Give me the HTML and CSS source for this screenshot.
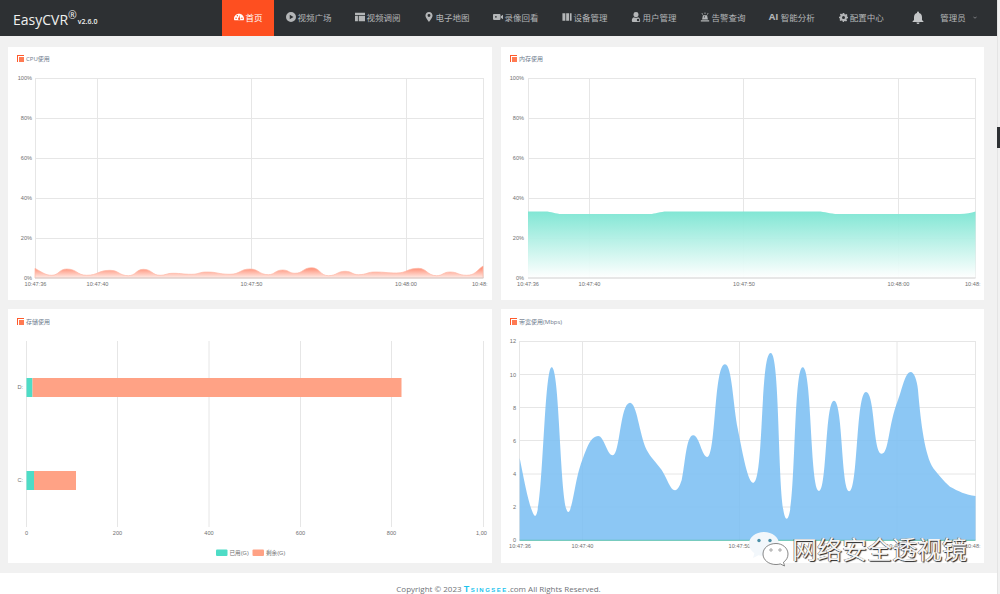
FILE: index.html
```html
<!DOCTYPE html>
<html lang="zh">
<head>
<meta charset="utf-8">
<title>EasyCVR</title>
<link rel="stylesheet" href="styles.css">
</head>
<body>
<div class="page">
  <header class="topbar">
    <div class="logo"><span class="logo-name">EasyCVR</span><span class="logo-reg">®</span><span class="logo-ver">v2.6.0</span></div>
    <nav class="nav">
      <a class="nav-item active"><svg class="ico" viewBox="0 0 24 24"><path fill-rule="evenodd" d="M12 4C5.400 4 0 9.400 0 16c0 1.600.4 3 1 4h22c.6-1 1-2.400 1-4 0-6.600-5.400-12-12-12zM5 16.500a1.800 1.800 0 1 1 0-3.600 1.800 1.800 0 0 1 0 3.600zM8 10.500a1.800 1.800 0 1 1 0-3.600 1.800 1.800 0 0 1 0 3.600zM19 16.500a1.800 1.800 0 1 1 0-3.600 1.800 1.800 0 0 1 0 3.600zM12 19a2.500 2.500 0 0 1-1-4.800L13 7l1 7.500A2.500 2.500 0 0 1 12 19z"/></svg>首页</a>
      <a class="nav-item"><svg class="ico" viewBox="0 0 24 24"><path fill-rule="evenodd" d="M12 0a12 12 0 1 0 0 24 12 12 0 0 0 0-24zM9 6.500l9 5.500-9 5.500z"/></svg>视频广场</a>
      <a class="nav-item"><svg class="ico" viewBox="0 0 24 24"><path d="M0 2h24v5H0zM0 9h7v13H0zM9 9h15v13H9z"/></svg>视频调阅</a>
      <a class="nav-item"><svg class="ico" viewBox="0 0 24 24"><path fill-rule="evenodd" d="M12 0C7 0 3.500 3.800 3.500 8.500 3.500 14 12 24 12 24s8.500-10 8.500-15.500C20.500 3.800 17 0 12 0zm0 12a3.500 3.500 0 1 1 0-7 3.500 3.500 0 0 1 0 7z"/></svg>电子地图</a>
      <a class="nav-item"><svg class="ico" viewBox="0 0 24 24"><path fill-rule="evenodd" d="M2 5h14a2 2 0 0 1 2 2v10a2 2 0 0 1-2 2H2a2 2 0 0 1-2-2V7a2 2 0 0 1 2-2zm5 4.500a2 2 0 1 0 0 4 2 2 0 0 0 0-4zM19 10l5-3.500v11L19 14z"/></svg>录像回看</a>
      <a class="nav-item"><svg class="ico" viewBox="0 0 24 24"><path d="M1 3h7v18H1zM10 3h7v18h-7zM19 3h4v18h-4z"/></svg>设备管理</a>
      <a class="nav-item"><svg class="ico" viewBox="0 0 24 24"><path fill-rule="evenodd" d="M12 0a6 6 0 0 1 6 6.500c0 3-2 6-6 6s-6-3-6-6A6 6 0 0 1 12 0zM7 12.500c1.500 1.300 3 2 5 2 2 0 3.500-.7 5-2 3.500 1 5 4.500 5 8.500 0 2-1.300 3-3 3H5c-1.700 0-3-1-3-3 0-4 1.500-7.500 5-8.500zM17 16a3 3 0 1 0 0 6 3 3 0 0 0 0-6z"/></svg>用户管理</a>
      <a class="nav-item"><svg class="ico" viewBox="0 0 24 24"><path fill-rule="evenodd" d="M7 8h10l2 10H5zM12 10a3 3 0 0 0-3 3h2a1 1 0 0 1 1-1zM2 20h20v3H2zM11 1h2v4h-2zM3.500 3.500l1.500-1.400 2.500 3-1.400 1.300zM20.500 3.500L19 2.100l-2.500 3 1.400 1.300z"/></svg>告警查询</a>
      <a class="nav-item"><span class="ai">AI</span>智能分析</a>
      <a class="nav-item"><svg class="ico ico-gear" viewBox="0 0 24 24"><path fill-rule="evenodd" d="M10 0h4l.7 3.200 2.300 1 2.800-1.800 2.800 2.800L21 8l1 2.300L24 10v4l-3.200.7-1 2.300 1.800 2.800-2.800 2.800L16 21l-2.300 1-.7 2h-3l-.7-3.200-2.300-1-2.800 1.800-2.800-2.800L3 16l-1-2.300L0 14v-4l3.200-.7 1-2.300L2.400 4.200l2.800-2.800L8 3.200l1.400-.6zM12 8a4 4 0 1 0 0 8 4 4 0 0 0 0-8z"/></svg>配置中心</a>
    </nav>
    <div class="user">
      <svg class="bell" viewBox="0 0 24 24"><path d="M12 0a2 2 0 0 1 2 2v1c4 1 6 4.500 6 8.500V17l3 3v1H1v-1l3-3v-5.500C4 7.500 6 4 10 3V2a2 2 0 0 1 2-2zM9 22h6a3 3 0 0 1-6 0z"/></svg>
      <span class="user-name">管理员</span>
      <svg class="chev" viewBox="0 0 10 6"><path d="M1 1l4 4 4-4" fill="none" stroke="currentColor" stroke-width="1.500"/></svg>
    </div>
  </header>

  <main class="board">
    <section class="card">
      <h2 class="card-title"><svg class="title-ico" viewBox="0 0 7 7"><path class="ti-a" d="M0 0h7v1H1v6H0z"/><path class="ti-b" d="M2 2h5v5H2z"/></svg>CPU使用</h2>
      <svg class="chart" viewBox="8 71 484 229" width="484" height="229">
        <defs>
          <linearGradient id="gCpu" x1="0" y1="0" x2="0" y2="1"><stop offset="0" stop-color="#ff7d60"/><stop offset="1" stop-color="#ffece7"/></linearGradient>
        </defs>
        <path class="grid" d="M35.500 78.500H483.500M35.500 118.500H483.500M35.500 158.500H483.500M35.500 198.500H483.500M35.500 238.500H483.500M35.500 78V278M97.500 78V278M251.500 78V278M406.500 78V278M483.500 78V278"/>
        <path fill="url(#gCpu)" stroke="#ffb9a8" stroke-width=".7" d="M35,268.300C43,273 46,275.300 51.700,275.300C59,275.300 59,269 66.700,269C77,269 77,275.300 86.700,275.300C98,275.300 98,270.300 110,270.300C119,270.300 119,275.700 128.300,275.700C136,275.700 136,269.300 143.300,269.300C152,269.300 152,275.300 160,275.300C166,275.300 166,273.300 173,273.300C182,273.300 182,274.300 191.700,274.300C199,274.300 199,272 206.700,272C218,272 218,274.300 230,274.300C240,274.300 240,269 250,269C259,269 259,274.700 268.300,274.700C275,274.700 275,270 282.700,270C289,270 289,273.300 295,273.300C303,273.300 303,267.700 311.700,267.700C320,267.700 320,275.700 328.300,275.700C337,275.700 337,271.300 345,271.300C352,271.300 352,274.700 358.300,274.700C367,274.700 367,272 375,272C386,272 386,273 396.700,273C407,273 407,268.300 418.300,268.300C427,268.300 427,275.700 436.700,275.700C443,275.700 443,272 450,272C458,272 458,275.300 466.700,275.300C475,275.300 476,271 483,266L483,278L35,278Z"/>
        <path class="axis" d="M35 278H483.500"/>
        <g class="tick end"><text x="32" y="80">100%</text><text x="32" y="120">80%</text><text x="32" y="160">60%</text><text x="32" y="200">40%</text><text x="32" y="240">20%</text><text x="32" y="280">0%</text></g>
        <g class="tick mid"><text x="35.500" y="286">10:47:36</text><text x="97.500" y="286">10:47:40</text><text x="251.500" y="286">10:47:50</text><text x="406" y="286">10:48:00</text></g>
        <text class="tick" x="472" y="286">10:48:</text>
      </svg>
    </section>

    <section class="card">
      <h2 class="card-title"><svg class="title-ico" viewBox="0 0 7 7"><path class="ti-a" d="M0 0h7v1H1v6H0z"/><path class="ti-b" d="M2 2h5v5H2z"/></svg>内存使用</h2>
      <svg class="chart" viewBox="501 71 483 229" width="483" height="229">
        <defs>
          <linearGradient id="gMem" x1="0" y1="0" x2="0" y2="1"><stop offset="0" stop-color="#7be5d2"/><stop offset="1" stop-color="#ffffff"/></linearGradient>
        </defs>
        <path class="grid" d="M528 78.500H975.500M528 118.500H975.500M528 158.500H975.500M528 198.500H975.500M528 238.500H975.500M528.500 78V278M589.500 78V278M743.500 78V278M898.500 78V278M975.500 78V278"/>
        <path fill="url(#gMem)" fill-opacity=".95" d="M528,211.500L545,211.500C552,211.500 555,214 562,214L650,214C655,214 660,211.500 667,211.500L818,211.500C825,211.500 830,214 838,214L960,214C966,214 971,213 975.500,211.500L975.500,278L528,278Z"/>
        <path class="axis" d="M528 278H975.500"/>
        <g class="tick end"><text x="524" y="80">100%</text><text x="524" y="120">80%</text><text x="524" y="160">60%</text><text x="524" y="200">40%</text><text x="524" y="240">20%</text><text x="524" y="280">0%</text></g>
        <g class="tick mid"><text x="528" y="286">10:47:36</text><text x="589.500" y="286">10:47:40</text><text x="744" y="286">10:47:50</text><text x="898.500" y="286">10:48:00</text></g>
        <text class="tick" x="965" y="286">10:48:</text>
      </svg>
    </section>

    <section class="card">
      <h2 class="card-title low"><svg class="title-ico" viewBox="0 0 7 7"><path class="ti-a" d="M0 0h7v1H1v6H0z"/><path class="ti-b" d="M2 2h5v5H2z"/></svg>存储使用</h2>
      <svg class="chart" viewBox="8 333 484 230" width="484" height="230">
        <path class="grid" d="M26.500 341V527M117.500 341V527M209 341V527M300.500 341V527M391.500 341V527M483.500 341V527"/>
        <rect class="teal" x="26.500" y="378" width="6" height="19"/>
        <rect class="salmon" x="32.500" y="378" width="369" height="19"/>
        <rect class="teal" x="26.500" y="471" width="7.500" height="19"/>
        <rect class="salmon" x="34" y="471" width="42" height="19"/>
        <g class="tick end"><text x="23" y="389">D:</text><text x="23" y="482">C:</text></g>
        <g class="tick mid"><text x="26.500" y="534.500">0</text><text x="117.500" y="534.500">200</text><text x="209" y="534.500">400</text><text x="300.500" y="534.500">600</text><text x="391.500" y="534.500">800</text></g>
        <text class="tick" x="476" y="534.500">1,00</text>
        <rect class="teal" x="216" y="549.500" width="11.500" height="6.500" rx="1"/>
        <text class="tick" x="229.500" y="555">已用(G)</text>
        <rect class="salmon" x="252.500" y="549.500" width="11.500" height="6.500" rx="1"/>
        <text class="tick" x="266" y="555">剩余(G)</text>
      </svg>
    </section>

    <section class="card">
      <h2 class="card-title low"><svg class="title-ico" viewBox="0 0 7 7"><path class="ti-a" d="M0 0h7v1H1v6H0z"/><path class="ti-b" d="M2 2h5v5H2z"/></svg>带宽使用(Mbps)</h2>
      <svg class="chart" viewBox="501 333 483 230" width="483" height="230">
        <path class="grid" d="M519.500 341.500H975.500M519.500 374.500H975.500M519.500 407.500H975.500M519.500 440.500H975.500M519.500 474H975.500M519.500 507H975.500M519.500 341V540M582.500 341V540M739.500 341V540M897 341V540M975.500 341V540"/>
        <path class="band" d="M519.700,458C524,480 530,512 535,516C543,516 544,367 551.700,367.300C560,367 560,512 568.300,512C572,512 575,482 580,466.700C586,450 590,436 598.300,436C604,436 607,455 612.700,455.300C620,455 620,403 630,402.700C637,403 639,433 646.700,450C651,458 656,462 661.700,470C667,478 670,490 675,490.300C678,490 680,485 681.700,480C685,466 686,435 693.300,435.300C699,435 702,457 707.300,457C716,457 714,364 725,364.300C732,364 733,405 738,430C743,455 748,483 753.300,482.700C764,483 760,353 770.700,353C781,353 777,519 786.700,518.700C796,519 793,367 802.700,367.300C812,367 810,491 819,491C827,491 825,401 834,400.700C843,401 841,491 849.300,491.300C858,491 856,392 866,392C875,392 873,454 881.700,453.700C889,454 888,425 898,400C902,390 905,372 910.700,372C914,372 917,380 918,390C921,425 925,455 933.300,468.300C939,475 943,481 950,486.700C958,491 966,495 975.500,496L975.500,540L519.700,540Z"/>
        <path class="baseline" d="M519.500 540.300H975.500"/>
        <g class="tick end"><text x="516" y="343">12</text><text x="516" y="376.500">10</text><text x="516" y="409.500">8</text><text x="516" y="442.500">6</text><text x="516" y="476">4</text><text x="516" y="509">2</text><text x="516" y="542">0</text></g>
        <g class="tick mid"><text x="520" y="548">10:47:36</text><text x="582.500" y="548">10:47:40</text><text x="739.500" y="548">10:47:50</text><text x="897" y="548">10:48:00</text></g>
        <text class="tick" x="965" y="548">10:48:</text>
      </svg>
    </section>
  </main>

  <footer class="footer">Copyright © 2023 <span class="brand">Tsingsee</span>.com All Rights Reserved.</footer>
</div>

<aside class="scroll"><div class="thumb"></div></aside>

<div class="watermark">
  <svg class="wechat" viewBox="0 0 42 36" width="42" height="36">
    <path fill="#f2f7fb" d="M17 1C8.700 1 2 6.300 2 13c0 3.800 2.100 7 5.400 9.200L6 27l5.500-2.700c1.700.4 3.600.7 5.500.7 8.300 0 15-5.300 15-12S25.300 1 17 1z"/>
    <circle cx="12" cy="9.500" r="1.700" fill="#4a90a8"/><circle cx="23" cy="9.500" r="1.700" fill="#4a90a8"/>
    <path fill="#fff" stroke="#555" stroke-width=".7" d="M29 12.500c-7.500 0-13 4.600-13 10.500s5.500 10.500 13 10.500c1.500 0 3-.2 4.300-.6l4.200 2.100-1-3.800c2.900-1.900 4.500-4.800 4.500-8.200 0-5.900-5.500-10.500-12-10.500z"/>
    <circle cx="24" cy="19" r="1.200" fill="none" stroke="#666" stroke-width=".6"/><circle cx="33" cy="19" r="1.200" fill="none" stroke="#666" stroke-width=".6"/>
  </svg>
  <span class="wm-text">网络安全透视镜</span>
</div>
</body>
</html>
```
FILE: styles.css
```css
* { box-sizing: border-box; }
html, body { margin: 0; height: 594px; overflow: hidden; }
body {
  display: flex;
  background: #f1f1f1;
  font-family: "Open Sans", "Noto Sans CJK SC", sans-serif;
  position: relative;
}
.page { width: 997px; height: 594px; display: flex; flex-direction: column; }

.topbar {
  height: 36px;
  flex: none;
  background: #2d3033;
  display: flex;
  align-items: center;
  color: #b4b6b8;
}
.logo {
  width: 222px;
  height: 36px;
  padding-left: 13px;
  line-height: 38px;
  white-space: nowrap;
  color: #f0f0f0;
}
.logo-name { font-size: 14px; }
.logo-reg { font-size: 10.500px; line-height: 1; vertical-align: 6px; }
.logo-ver { font-size: 7px; font-weight: 600; line-height: 1; margin-left: 1px; vertical-align: 1px; }

.nav { display: flex; height: 36px; padding-bottom: 2px; }
.nav-item {
  display: flex;
  align-items: center;
  gap: 2px;
  padding: 0 11.500px;
  font-size: 8.500px;
  white-space: nowrap;
}
.nav-item.active { background: #fe4f20; color: #fff; margin-bottom: -2px; padding-bottom: 2px; }
.ico { width: 10px; height: 10px; fill: currentColor; flex: none; }
.ico-gear { width: 9px; height: 9px; margin-left: 1px; }
.ai { width: 10px; font-size: 9.500px; font-weight: 700; line-height: 10px; }

.user { display: flex; align-items: center; margin-left: 17px; height: 36px; padding-bottom: 2px; }
.bell { width: 12px; height: 13px; fill: #c4c6c8; }
.user-name { font-size: 8.500px; margin-left: 16px; }
.chev { width: 4px; height: 3px; margin-left: 7px; }

.board {
  flex: none;
  height: 537px;
  padding: 11px 13px 10px 8px;
  display: grid;
  grid-template-columns: 484px 483px;
  grid-template-rows: 253px 254px;
  column-gap: 9px;
  row-gap: 9px;
}
.card { background: #fff; display: flex; flex-direction: column; overflow: hidden; }
.card-title {
  margin: 0;
  height: 24px;
  flex: none;
  padding: 8px 0 0 9px;
  display: flex;
  align-items: flex-start;
  gap: 2px;
  font-size: 6px;
  line-height: 9px;
  font-weight: 400;
  color: #6d7a8c;
}
.card-title.low { padding-top: 9px; }
.title-ico { width: 7px; height: 7px; flex: none; }
.ti-a { fill: #ff5a2b; }
.ti-b { fill: #ff7a52; }

.chart { display: block; flex: none; }
.grid { stroke: #e6e6e6; stroke-width: 1; fill: none; }
.axis { stroke: #cfcfcf; stroke-width: 1.200; fill: none; }
.tick { font-size: 5.600px; fill: #707070; font-family: "Liberation Sans", "Noto Sans CJK SC", sans-serif; }
.end text { text-anchor: end; }
.mid text { text-anchor: middle; }
.teal { fill: #4edcc6; }
.salmon { fill: #ffa285; }
.band { fill: #7cbff2; fill-opacity: .88; }
.baseline { stroke: #55bfae; stroke-width: 1; fill: none; }

.footer {
  flex: 1;
  background: #fff;
  text-align: center;
  font-size: 8px;
  line-height: 31px;
  color: #6f7378;
  overflow: hidden;
}
.brand {
  color: #1cc3ee;
  font-family: "Liberation Sans", sans-serif;
  font-weight: 700;
  font-variant: small-caps;
  letter-spacing: 1.500px;
  font-size: 9px;
}

.scroll { width: 3px; height: 594px; background: #f1f1f1; border-left: 1px solid #e4e4e4; }
.thumb { width: 3px; height: 21px; margin-top: 127px; margin-left: -1px; background: #2d3033; }

.watermark {
  position: absolute;
  left: 747px;
  top: 530px;
  display: flex;
  align-items: center;
  gap: 3px;
}
.wm-text {
  font-size: 25px;
  line-height: 36px;
  margin-bottom: 2px;
  font-family: "Noto Sans CJK SC", sans-serif;
  color: #f4f4f4;
  text-shadow: 1px 1px 1px #222, -.5px -.5px 0 #555;
  white-space: nowrap;
}
```
